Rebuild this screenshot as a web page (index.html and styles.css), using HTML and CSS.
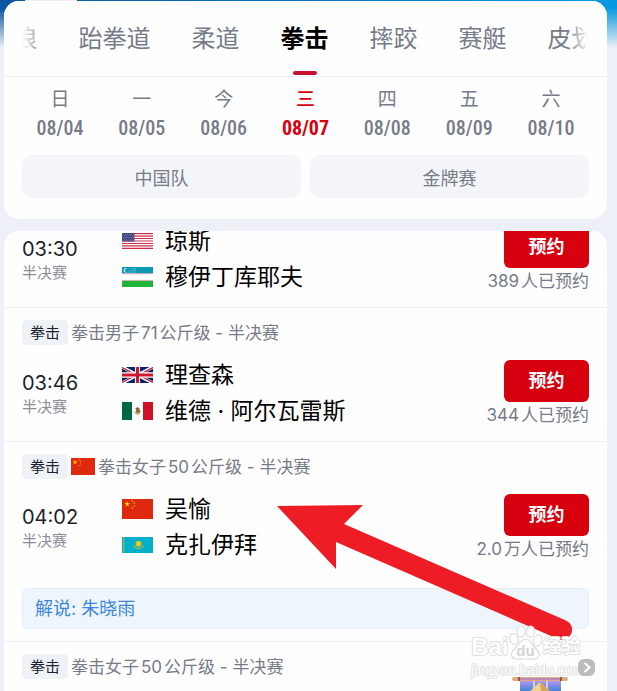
FILE: index.html
```html
<!DOCTYPE html>
<html lang="zh-CN">
<head>
<meta charset="utf-8">
<meta name="viewport" content="width=device-width, initial-scale=1">
<title>拳击</title>
<link rel="stylesheet" href="styles.css">
</head>
<body>
<svg class="defs" aria-hidden="true">
  <defs>
    <path id="star" d="M0-1 .225-.309.951-.309.363.118.588.809 0 .382-.588.809-.363.118-.951-.309-.225-.309Z"/>
    <symbol id="cn" viewBox="0 0 30 20">
      <path fill="#de2910" d="M0 0h30v20H0z"/>
      <g fill="#ffde00">
        <use href="#star" transform="translate(5 5) scale(3)"/>
        <use href="#star" transform="translate(10 2) rotate(23) scale(1.1)"/>
        <use href="#star" transform="translate(12 4) rotate(46) scale(1.1)"/>
        <use href="#star" transform="translate(12 7) rotate(70) scale(1.1)"/>
        <use href="#star" transform="translate(10 9) rotate(20) scale(1.1)"/>
      </g>
    </symbol>
  </defs>
</svg>

<header class="card top">
  <nav class="sports">
    <a href="#">冲浪</a>
    <a href="#">跆拳道</a>
    <a href="#">柔道</a>
    <a href="#" class="active" aria-current="page">拳击</a>
    <a href="#">摔跤</a>
    <a href="#">赛艇</a>
    <a href="#">皮划艇</a>
  </nav>
  <div class="days">
    <button type="button"><span>日</span><b>08/04</b></button>
    <button type="button"><span>一</span><b>08/05</b></button>
    <button type="button"><span>今</span><b>08/06</b></button>
    <button type="button" class="active"><span>三</span><b>08/07</b></button>
    <button type="button"><span>四</span><b>08/08</b></button>
    <button type="button"><span>五</span><b>08/09</b></button>
    <button type="button"><span>六</span><b>08/10</b></button>
  </div>
  <div class="filters">
    <button type="button">中国队</button>
    <button type="button">金牌赛</button>
  </div>
</header>

<main class="card list">
  <section class="event partial">
    <div class="match">
      <div class="when"><time>03:30</time><span>半决赛</span></div>
      <ul class="players">
        <li>
          <svg class="flag wide" viewBox="0 0 31 16" preserveAspectRatio="none">
            <path fill="#fff" d="M0 0h31v16H0z"/>
            <path stroke="#c8324a" stroke-width="1.23" d="M0 .6h31M0 3.1h31M0 5.5h31M0 8h31M0 10.5h31M0 12.9h31M0 15.4h31"/>
            <path fill="#46467f" d="M0 0h12.4v8.6H0z"/>
            <path stroke="#9999bd" stroke-width=".6" stroke-dasharray=".8 1.2" d="M1 1.5h11M2 3h10M1 4.5h11M2 6h10M1 7.4h11"/>
          </svg>
          <span>琼斯</span>
        </li>
        <li>
          <svg class="flag" viewBox="0 0 31 20" preserveAspectRatio="none">
            <path fill="#fff" d="M0 0h31v20H0z"/>
            <path fill="#0c99b5" d="M0 0h31v6.4H0z"/>
            <path fill="#1eb53a" d="M0 13.7h31V20H0z"/>
            <path stroke="#d98791" stroke-width=".6" d="M0 6.7h31M0 13.4h31"/>
            <circle cx="4" cy="3.3" r="2.2" fill="#fff"/>
            <circle cx="4.9" cy="3.3" r="2" fill="#0c99b5"/>
            <path stroke="#9fd8e2" stroke-width=".8" stroke-dasharray=".8 1" d="M9.5 1.5h5M7.8 3.3h7M6 5.1h9"/>
          </svg>
          <span>穆伊丁库耶夫</span>
        </li>
      </ul>
      <div class="book"><button type="button">预约</button><span><i>389</i>人已预约</span></div>
    </div>
  </section>

  <section class="event">
    <h2><span class="tag">拳击</span><span>拳击男子<i>71</i>公斤级 - 半决赛</span></h2>
    <div class="match">
      <div class="when"><time>03:46</time><span>半决赛</span></div>
      <ul class="players">
        <li>
          <svg class="flag wide" viewBox="0 0 60 30" preserveAspectRatio="none">
            <path fill="#012169" d="M0 0h60v30H0z"/>
            <path stroke="#fff" stroke-width="6" d="m0 0 60 30M60 0 0 30"/>
            <path stroke="#c8102e" stroke-width="2.4" d="m0 1 28 14M60 29 32 15M60 1 32 15M0 29l28-14"/>
            <path stroke="#fff" stroke-width="10" d="M30 0v30M0 15h60"/>
            <path stroke="#d0142e" stroke-width="6" d="M30 0v30M0 15h60"/>
          </svg>
          <span>理查森</span>
        </li>
        <li>
          <svg class="flag mid" viewBox="0 0 31 18" preserveAspectRatio="none">
            <path fill="#fff" d="M0 0h31v18H0z"/>
            <path fill="#006847" d="M0 0h10v18H0z"/>
            <path fill="#ce1126" d="M21 0h10v18H21z"/>
            <path fill="none" stroke="#7fae72" d="M12.7 9c0 4.4 5.6 4.4 5.6 0"/>
            <path fill="#8c6535" d="m13.400 6.500 2.200-1.500 1.800 1.200.8 3.300-2 2.200-2.600-1 .8-1.700Z"/>
            <path fill="#e0a84e" d="M14.800 10.500h2v1.200h-2z"/>
          </svg>
          <span>维德 · 阿尔瓦雷斯</span>
        </li>
      </ul>
      <div class="book"><button type="button">预约</button><span><i>344</i>人已预约</span></div>
    </div>
  </section>

  <section class="event">
    <h2><span class="tag">拳击</span><svg class="team" viewBox="0 0 30 20" preserveAspectRatio="none"><use href="#cn"/></svg><span>拳击女子<i>50</i>公斤级 - 半决赛</span></h2>
    <div class="match">
      <div class="when"><time>04:02</time><span>半决赛</span></div>
      <ul class="players">
        <li>
          <svg class="flag" viewBox="0 0 30 20" preserveAspectRatio="none"><use href="#cn"/></svg>
          <span>吴愉</span>
        </li>
        <li>
          <svg class="flag wide" viewBox="0 0 31 16" preserveAspectRatio="none">
            <path fill="#00afca" d="M0 0h31v16H0z"/>
            <path stroke="#b6b73c" stroke-width="1.4" stroke-dasharray="1.5 .5" d="M1.700 0v16"/>
            <circle cx="16.500" cy="6.800" r="3" fill="#c7c53a"/>
            <circle cx="16.500" cy="6.800" r="2.100" fill="#fec50c"/>
            <path fill="none" stroke="#b6b73c" stroke-width="1.2" d="M11.500 8.500c1.200 3 3.500 2 5 3.200 1.500-1.200 3.800-.2 5-3.200"/>
          </svg>
          <span>克扎伊拜</span>
        </li>
      </ul>
      <div class="book"><button type="button">预约</button><span><i>2.0</i>万人已预约</span></div>
    </div>
    <p class="commentary">解说: 朱晓雨</p>
  </section>

  <section class="event">
    <h2><span class="tag">拳击</span><span>拳击女子<i>50</i>公斤级 - 半决赛</span></h2>
  </section>
</main>

<svg class="pointer" viewBox="0 0 296 136" aria-hidden="true">
  <path fill="#ee1c25" d="M0 1 86 0 67 19 289 115.500A10 10 0 0 1 281 134L59 37V64Z"/>
</svg>

<div class="watermark">
  <div class="brand">
    <span>Bai</span>
    <svg viewBox="0 0 34 36" aria-hidden="true">
      <g fill="#fff" fill-opacity=".85" stroke="#dedede" stroke-width="1.2">
        <ellipse cx="5" cy="14" rx="4" ry="5.500" transform="rotate(-12 5 14)"/>
        <ellipse cx="12" cy="6.500" rx="4" ry="5.500"/>
        <ellipse cx="21.500" cy="6.500" rx="4" ry="5.500" transform="rotate(8 21.500 6.500)"/>
        <ellipse cx="28.500" cy="15.500" rx="4" ry="5.500" transform="rotate(12 28.500 15.500)"/>
        <path d="M16.500 14c4 0 5.500 4 8 7 3 3.500 6.500 5.500 5.500 9.500-1.500 5-8 3.500-13.500 3.500S4 35.500 2.500 30.500C1.500 26.500 5 24.500 8 21c2.500-3 4.500-7 8.500-7Z"/>
      </g>
      <text x="16.500" y="31" text-anchor="middle">du</text>
    </svg>
    <span class="cjk">经验</span>
  </div>
  <div class="site">jingyan.baidu.com</div>
</div>

<a class="more" href="#" aria-label="更多">
  <svg viewBox="0 0 17 17" aria-hidden="true"><rect width="17" height="17" rx="6" fill="#bcbcbc"/><path fill="none" stroke="#fff" stroke-width="2.2" d="m6.500 4 5 4.500-5 4.500"/></svg>
</a>

<svg class="banner" viewBox="0 0 58 15" aria-hidden="true">
  <defs>
    <linearGradient id="cloth" x2="0" y2="1"><stop stop-color="#c99af0"/><stop offset="1" stop-color="#4385d8"/></linearGradient>
  </defs>
  <path fill="url(#cloth)" d="M9 3h41v12H9z"/>
  <path fill="#e8dcfa" opacity=".8" d="M22 4h2v11h-2zM35 4h2v11h-2z"/>
  <path fill="#f3d38c" d="M29 6 39 15H19Z"/>
  <path fill="#d3a65a" d="m29 6 10 9h-9Z"/>
  <rect x="1" y="1" width="56" height="4" rx="2" fill="#e0ab7d"/>
  <path fill="#9a5a38" d="M7 1h2v4H7zM49 1h2v4h-2z"/>
  <path fill="#b98ab8" d="M9 2h40v2H9z"/>
</svg>
</body>
</html>
```
FILE: styles.css
```css
* {
  box-sizing: border-box;
}

body {
  position: relative;
  display: flex;
  flex-direction: column;
  gap: 12px;
  height: 100vh;
  margin: 0;
  padding: 1px 10px 0 4px;
  overflow: hidden;
  background:
    linear-gradient(90deg, #f3edf3, #f3edf3) 25px 0 / 52px 1px no-repeat,
    linear-gradient(180deg, transparent, #edf0f6) 0 8px / 100% 40px no-repeat,
    linear-gradient(90deg, #0c559f, #0899e2) 0 0 / 100% 48px no-repeat,
    #edf0f6;
  color: #1c1e2c;
  font-family: Inter, "Noto Sans CJK SC", sans-serif;
}

.defs {
  position: absolute;
  width: 0;
  height: 0;
}

button {
  margin: 0;
  padding: 0;
  border: 0;
  background: none;
  color: inherit;
  font: inherit;
}

.card {
  flex: none;
  border-radius: 15px;
  background: #fefefe;
}

/* sport tabs */
.sports {
  position: relative;
  display: flex;
  justify-content: center;
  gap: 41px;
  height: 76px;
  padding: 0 20px 0 18px;
  border-bottom: 1px solid #f0f0f2;
  border-radius: 15px 15px 0 0;
  overflow: hidden;
}

.sports::before,
.sports::after {
  content: "";
  position: absolute;
  top: 0;
  bottom: 0;
  left: 0;
  z-index: 1;
  width: 40px;
  background: linear-gradient(90deg, #fefefe 18px, transparent);
}

.sports::after {
  right: 0;
  left: auto;
  background: linear-gradient(270deg, #fefefe 18px, transparent);
}

.sports a {
  position: relative;
  flex: none;
  color: #777b88;
  font-size: 24px;
  line-height: 76px;
  text-decoration: none;
}

.sports .active {
  color: #000;
  font-weight: 700;
}

.sports .active::after {
  content: "";
  position: absolute;
  top: 70px;
  left: 12px;
  width: 24px;
  height: 4px;
  border-radius: 2px;
  background: #c4122f;
}

/* dates */
.days {
  display: grid;
  grid-template-columns: repeat(7, 1fr);
  padding: 10px 15px 13px;
}

.days button {
  display: flex;
  flex-direction: column;
  gap: 2px;
  align-items: center;
  color: #777b88;
}

.days span {
  font-size: 19px;
  line-height: 26px;
}

.days b {
  font-family: "Liberation Sans Narrow", "Roboto Condensed", "Open Sans Condensed", "DejaVu Sans Condensed", sans-serif;
  font-size: 20px;
  font-weight: 500;
  line-height: 27px;
}

.days .active {
  color: #d7000f;
}

.days .active span {
  font-weight: 500;
}

.days .active b {
  font-weight: 700;
}

.filters {
  display: grid;
  grid-template-columns: 1fr 1fr;
  gap: 9px;
  padding: 0 18px 21px;
}

.filters button {
  height: 43px;
  border-radius: 10px;
  background: #f4f5f8;
  color: #777b88;
  font-size: 18px;
}

/* schedule */
.list {
  overflow: hidden;
}

.event {
  padding: 12px 18px 15px;
}

.event + .event {
  border-top: 1px solid #f0f0f2;
}

.partial {
  margin-top: -5px;
  padding-top: 0;
}

h2 {
  display: flex;
  align-items: center;
  gap: 3px;
  height: 25px;
  margin: 0 0 15px;
  color: #777b88;
  font-size: 17px;
  font-weight: 400;
  line-height: 24px;
}

i {
  margin: 0 2px;
  font-style: normal;
}

.tag {
  padding: 0 8px;
  border-radius: 5px;
  background: #eef1f6;
  color: #1c1e2c;
  font-size: 15px;
  line-height: 25px;
}

.team {
  width: 24px;
  height: 17px;
}

.match {
  display: flex;
  height: 66px;
}

.when {
  display: flex;
  flex: none;
  flex-direction: column;
  width: 100px;
  padding-top: 10px;
}

.when time {
  font-size: 20px;
  line-height: 26px;
}

.when span {
  color: #8b8e9a;
  font-size: 15px;
  line-height: 22px;
}

.players {
  display: flex;
  flex: 1;
  flex-direction: column;
  gap: 6px;
  margin: 0;
  padding: 0;
  list-style: none;
}

.players li {
  display: flex;
  align-items: center;
  gap: 12px;
  height: 30px;
  color: #000;
  font-size: 23px;
  line-height: 30px;
}

.flag {
  width: 31px;
  height: 20px;
}

.flag.wide {
  height: 16px;
}

.flag.mid {
  height: 18px;
}

.book {
  display: flex;
  flex: none;
  flex-direction: column;
  align-items: flex-end;
  color: #777b88;
  font-size: 17px;
  line-height: 26px;
}

.book button {
  flex: none;
  width: 85px;
  height: 42px;
  border-radius: 6px;
  background: #d7000f;
  color: #fff;
  font-size: 18px;
  font-weight: 700;
}

.commentary {
  margin: 28px 0 -3px;
  padding: 0 12px;
  border: 1px solid #e6eefa;
  border-radius: 6px;
  background: #eef5fd;
  color: #3d86dc;
  font-size: 18px;
  line-height: 39px;
}

/* overlays */
.pointer {
  position: absolute;
  top: 505px;
  left: 277px;
  width: 296px;
  height: 136px;
  overflow: visible;
}

.watermark {
  position: absolute;
  right: 33px;
  bottom: 12px;
  color: #fff;
  font-family: "Liberation Sans", "Noto Sans CJK SC", sans-serif;
  text-shadow: 1px 0 #dedede, -1px 0 #dedede, 0 1px #dedede, 0 -1px #dedede;
}

.brand {
  display: flex;
  align-items: flex-end;
  font-size: 24px;
  font-weight: 700;
  line-height: 28px;
}

.brand svg {
  width: 34px;
  height: 36px;
}

.brand text {
  fill: #d4d4d4;
  font-size: 15px;
  text-shadow: none;
}

.brand .cjk {
  font-size: 19px;
}

.site {
  font-size: 14px;
  line-height: 18px;
}

.more {
  position: absolute;
  right: 22px;
  bottom: 15px;
  width: 17px;
  height: 17px;
}

.more svg {
  display: block;
}

.banner {
  position: absolute;
  right: 48px;
  bottom: 0;
  width: 58px;
  height: 15px;
}
```
